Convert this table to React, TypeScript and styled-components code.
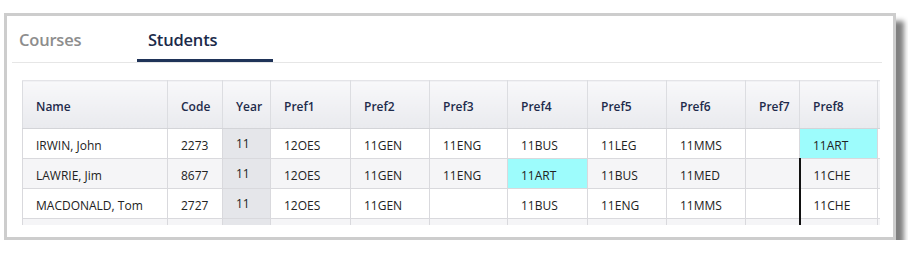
import React from 'react';
import styled, { createGlobalStyle } from 'styled-components';

const GlobalStyle = createGlobalStyle`
  html, body {
    margin: 0;
    padding: 0;
    background: #ffffff;
  }
  body {
    font-family: 'Open Sans', 'Noto Sans', sans-serif;
  }
`;

// outer card with the grey frame and drop shadow
const Frame = styled.div`
  box-sizing: border-box;
  margin: 13px 0 0 4px;
  width: 892px;
  height: 227px;
  border: 3px solid #cdcdcd;
  background: #fff;
  box-shadow: 8px 8px 5px #808080;
  overflow: hidden;
`;

const TabBar = styled.div`
  display: flex;
  margin: 0 11px 0 5px;
  border-bottom: 1px solid #e6e6e6;
`;

const Tab = styled.div<{ $active?: boolean; $width: number; $pad: number }>`
  box-sizing: border-box;
  height: 46px;
  padding: 12px 0 0 ${p => p.$pad}px;
  width: ${p => p.$width}px;
  font-size: 16.5px;
  font-weight: 600;
  letter-spacing: -0.2px;
  color: ${p => (p.$active ? '#1b2a4a' : '#8d8d8d')};
  border-bottom: 3px solid ${p => (p.$active ? '#1f3358' : 'transparent')};
`;

const TableViewport = styled.div`
  margin: 17px 0 0 15px;
  width: 858px;
  height: 145px;
  overflow: hidden;
`;

const Grid = styled.table`
  border-collapse: collapse;
  table-layout: fixed;
  width: 936px;
  font-size: 12px;
`;

const HeadCell = styled.th`
  box-sizing: border-box;
  height: 48px;
  padding: 4px 0 0 13px;
  text-align: left;
  font-weight: 600;
  color: #1e2b4b;
  background: linear-gradient(#f8f8fa, #e9eaee);
  border: 1px solid #dcdde1;
  border-top-color: #e4e4e8;
  border-bottom-color: #d3d4d8;
`;

const Row = styled.tr<{ $alt?: boolean }>`
  background: ${p => (p.$alt ? '#f5f5f7' : '#ffffff')};
`;

const Cell = styled.td<{ $year?: boolean; $hit?: boolean; $mark?: boolean }>`
  box-sizing: border-box;
  height: 30px;
  padding: ${p => (p.$year ? '6px 0 0 13px' : '3px 0 0 13px')};
  vertical-align: ${p => (p.$year ? 'top' : 'middle')};
  color: #222;
  white-space: nowrap;
  border: 1px solid #d9d9dd;
  background: ${p => (p.$hit ? '#9dfcfc' : p.$year ? '#e5e6ea' : 'transparent')};
  ${p => (p.$mark ? 'border-left: 2px solid #111;' : '')}
`;

const columns = [
  ['Name', 145],
  ['Code', 55],
  ['Year', 48],
  ['Pref1', 80],
  ['Pref2', 79],
  ['Pref3', 78],
  ['Pref4', 80],
  ['Pref5', 79],
  ['Pref6', 79],
  ['Pref7', 54],
  ['Pref8', 78],
  ['', 81],
] as const;

type Student = {
  name: string;
  code: string;
  year: string;
  prefs: string[];
  hit: number;
  mark: boolean;
};

const students: Student[] = [
  { name: 'IRWIN, John', code: '2273', year: '11', prefs: ['12OES', '11GEN', '11ENG', '11BUS', '11LEG', '11MMS', '', '11ART', ''], hit: 7, mark: false },
  { name: 'LAWRIE, Jim', code: '8677', year: '11', prefs: ['12OES', '11GEN', '11ENG', '11ART', '11BUS', '11MED', '', '11CHE', ''], hit: 3, mark: true },
  { name: 'MACDONALD, Tom', code: '2727', year: '11', prefs: ['12OES', '11GEN', '', '11BUS', '11ENG', '11MMS', '', '11CHE', ''], hit: -1, mark: true },
  { name: '', code: '', year: '', prefs: ['', '', '', '', '', '', '', '', ''], hit: -1, mark: true },
];

export default function App() {
  return (
    <>
      <GlobalStyle />
      <Frame>
        <TabBar>
          <Tab $width={125} $pad={7}>Courses</Tab>
          <Tab $width={136} $pad={11} $active>Students</Tab>
        </TabBar>
        <TableViewport>
          <Grid>
            <colgroup>
              {columns.map(([, w], i) => (
                <col key={i} style={{ width: w }} />
              ))}
            </colgroup>
            <thead>
              <tr>
                {columns.map(([label], i) => (
                  <HeadCell key={i}>{label}</HeadCell>
                ))}
              </tr>
            </thead>
            <tbody>
              {students.map((s, r) => (
                <Row key={r} $alt={r % 2 === 1}>
                  <Cell>{s.name}</Cell>
                  <Cell>{s.code}</Cell>
                  <Cell $year>{s.year}</Cell>
                  {s.prefs.map((p, i) => (
                    <Cell key={i} $hit={i === s.hit} $mark={i === 7 && s.mark}>
                      {p}
                    </Cell>
                  ))}
                </Row>
              ))}
            </tbody>
          </Grid>
        </TableViewport>
      </Frame>
    </>
  );
}
